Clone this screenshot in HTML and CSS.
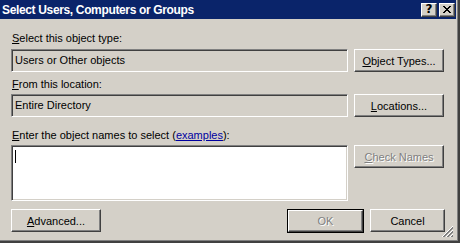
FILE: index.html
```html
<!DOCTYPE html>
<html lang="en">
<head>
    <meta charset="UTF-8">
    <meta name="viewport" content="width=device-width, initial-scale=1.0">
    <title>Select Users, Computers or Groups</title>
    <link rel="stylesheet" href="styles.css">
</head>
<body>

    <div class="window">
        <div class="title-bar">
            <span class="title">Select Users, Computers or Groups</span>
            <div class="title-buttons">
                <button type="button" class="caption-button help">?</button>
                <button type="button" class="caption-button close">
                    <svg width="8" height="7" viewBox="0 0 8 7">
                        <path d="M0 0h2v1h-2z M6 0h2v1h-2z M1 1h2v1h-2z M5 1h2v1h-2z M2 2h4v1h-4z M3 3h2v1h-2z M2 4h4v1h-4z M1 5h2v1h-2z M5 5h2v1h-2z M0 6h2v1h-2z M6 6h2v1h-2z" fill="#000"/>
                    </svg>
                </button>
            </div>
        </div>

        <div class="dialog">
            <div class="label label-first"><u>S</u>elect this object type:</div>
            <div class="row">
                <div class="field">Users or Other objects</div>
                <button type="button" class="button"><u>O</u>bject Types...</button>
            </div>

            <div class="label label-second"><u>F</u>rom this location:</div>
            <div class="row">
                <div class="field">Entire Directory</div>
                <button type="button" class="button"><u>L</u>ocations...</button>
            </div>

            <div class="label label-third"><u>E</u>nter the object names to select (<a href="#" class="link">examples</a>):</div>
            <div class="row row-top">
                <div class="names-box"><span class="caret"></span></div>
                <button type="button" class="button disabled"><u>C</u>heck Names</button>
            </div>

            <div class="footer">
                <button type="button" class="button advanced"><u>A</u>dvanced...</button>
                <div class="footer-right">
                    <div class="default-frame">
                        <button type="button" class="button small disabled">OK</button>
                    </div>
                    <button type="button" class="button small">Cancel</button>
                </div>
            </div>
        </div>

        <svg class="grip" width="12" height="12" viewBox="0 0 12 12">
            <path d="M11 0 L0 11 M11 4 L4 11 M11 8 L8 11" stroke="#fff" stroke-width="1"/>
            <path d="M11 1 L1 11 M11 2 L2 11 M11 5 L5 11 M11 6 L6 11 M11 9 L9 11 M11 10 L10 11" stroke="#808080" stroke-width="1"/>
        </svg>
    </div>

</body>
</html>
```

FILE: styles.css
```css
body {
    margin: 0;
    background: #d4d0c8;
    font-family: "Liberation Sans", Arial, sans-serif;
    font-size: 11px;
    line-height: 13px;
    color: #000;
}

.window {
    position: relative;
    width: 456px;
    height: 241px;
    background: #d4d0c8;
    border-right: 2px solid #404040;
    border-bottom: 2px solid #404040;
    box-shadow: inset -1px -1px 0 #808080;
    padding-right: 2px;
    display: flex;
    flex-direction: column;
}

.title-bar {
    height: 19px;
    background: #0a246a;
    display: flex;
    align-items: center;
    justify-content: space-between;
    padding: 0 1px 0 2px;
}

.title {
    color: #fff;
    font-weight: bold;
    font-size: 12px;
    letter-spacing: -0.35px;
    position: relative;
    top: 1px;
}

.title-buttons {
    display: flex;
    gap: 2px;
}

.caption-button {
    width: 16px;
    height: 14px;
    padding: 0;
    margin: 0;
    background: #d4d0c8;
    border: 1px solid;
    border-color: #fff #404040 #404040 #fff;
    box-shadow: inset -1px -1px 0 #808080;
    display: flex;
    align-items: center;
    justify-content: center;
    font-family: "DejaVu Sans", sans-serif;
    font-weight: bold;
    font-size: 12px;
    line-height: 11px;
}

.dialog {
    display: flex;
    flex-direction: column;
    padding: 0 11px 0 11px;
}

.label {
    height: 13px;
    white-space: nowrap;
}

.label-first {
    margin-top: 13px;
    margin-left: 1px;
}

.label-second {
    margin-top: 6px;
    margin-left: 1px;
}

.label-third {
    margin-top: 12px;
    margin-left: 1px;
}

.link {
    color: #0000a0;
    text-decoration: underline;
}

.row {
    display: flex;
    gap: 6px;
    margin-top: 4px;
}

.label-second + .row,
.label-third + .row {
    margin-top: 3px;
}

.row-top {
    align-items: flex-start;
}

.field {
    width: 337px;
    height: 23px;
    box-sizing: border-box;
    border: 1px solid;
    border-color: #808080 #fff #fff #808080;
    box-shadow: inset 1px 1px 0 #404040, inset -1px -1px 0 #d4d0c8;
    padding: 4px 3px 0 3px;
}

.names-box {
    width: 337px;
    height: 56px;
    box-sizing: border-box;
    background: #fff;
    border: 1px solid;
    border-color: #808080 #fff #fff #808080;
    box-shadow: inset 1px 1px 0 #404040, inset -1px -1px 0 #d4d0c8;
    padding: 4px 3px;
}

.caret {
    display: block;
    width: 1px;
    height: 13px;
    background: #000;
}

.button {
    width: 90px;
    height: 23px;
    box-sizing: border-box;
    margin: 0;
    padding: 0;
    background: #d4d0c8;
    border: 1px solid;
    border-color: #fff #404040 #404040 #fff;
    box-shadow: inset -1px -1px 0 #808080;
    font-family: "Liberation Sans", Arial, sans-serif;
    font-size: 11px;
    color: #000;
    text-align: center;
}

.button.disabled {
    color: #808080;
    text-shadow: 1px 1px 0 #fff;
}

.footer {
    display: flex;
    justify-content: space-between;
    margin-top: 8px;
}

.footer-right {
    display: flex;
    gap: 6px;
}

.default-frame {
    border: 1px solid #000;
}

.default-frame .button {
    width: 74px;
    height: 22px;
}

.button.small {
    width: 75px;
}

.grip {
    position: absolute;
    right: 4px;
    bottom: 3px;
}
```
